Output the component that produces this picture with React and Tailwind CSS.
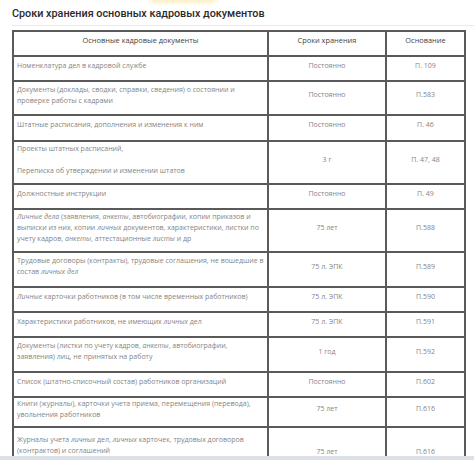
import React from "react";

const I = ({ children }) => <i className="italic">{children}</i>;

const rows = [
  { a: [["Номенклатура дел в кадровой службе"]], b: "Постоянно", c: "П. 109" },
  { a: [["Документы (доклады, сводки, справки, сведения) о состоянии и", "проверке работы с кадрами"]], b: "Постоянно", c: "П.583" },
  { a: [["Штатные расписания, дополнения и изменения к ним"]], b: "Постоянно", c: "П. 46" },
  { a: [["Проекты штатных расписаний,"], ["Переписка об утверждении и изменении штатов"]], b: "3 г", c: "П. 47, 48" },
  { a: [["Должностные инструкции"]], b: "Постоянно", c: "П. 49" },
  {
    a: [[
      <><I>Личные дела</I> (заявления, <I>анкеты</I>, автобиографии, копии приказов и</>,
      <>выписки из них, копии <I>личных</I> документов, характеристики, листки по</>,
      <>учету кадров, <I>анкеты</I>, аттестационные <I>листы</I> и др</>,
    ]],
    b: "75 лет",
    c: "П.588",
  },
  { a: [["Трудовые договоры (контракты), трудовые соглашения, не вошедшие в", <>состав <I>личных дел</I></>]], b: "75 л. ЭПК", c: "П.589" },
  { a: [[<><I>Личные</I> карточки работников (в том числе временных работников)</>]], b: "75 л. ЭПК", c: "П.590" },
  { a: [[<>Характеристики работников, не имеющих <I>личных</I> дел</>]], b: "75 л. ЭПК", c: "П.591" },
  { a: [[<>Документы (листки по учету кадров, <I>анкеты</I>, автобиографии,</>, "заявления) лиц, не принятых на работу"]], b: "1 год", c: "П.592" },
  { a: [["Список (штатно-списочный состав) работников организаций"]], b: "Постоянно", c: "П.602" },
  { a: [["Книги (журналы), карточки учета приема, перемещения (перевода),", "увольнения работников"]], b: "75 лет", c: "П.616" },
];

const cell = "bg-white flex flex-col justify-center pt-[2px] pb-[9px] overflow-visible";
const txt = "text-[7px] leading-[11px] text-[#858585] whitespace-nowrap";
const head = "text-[7.4px] leading-[11px] text-[#444] font-medium";

export default function App() {
  return (
    <div className="w-[474px] h-[460px] bg-white flex flex-col overflow-hidden" style={{ fontFamily: '"Open Sans", "Liberation Sans", sans-serif' }}>
      <div className="relative flex-1 overflow-hidden">
        <div className="absolute left-[150px] top-[-6px] w-[66px] h-[9px] rounded-full bg-[#fcefc4] blur-[2px]" />
        <div className="pl-[12px] pt-[6px]">
          <h1 className="text-[10.8px] leading-[15px] text-[#2a2a2a] font-medium" style={{ fontFamily: 'Roboto, "Liberation Sans", sans-serif' }}>
            Сроки хранения основных кадровых документов
          </h1>
          <div className="mt-[4px] h-px bg-[#e9e9e9]" />
        </div>
        <div className="ml-[12px] mt-[4px] w-[454px] bg-[#5a5a5a] p-[2px] grid grid-cols-[253px_116px_77px] gap-[2px] grid-rows-[23px_23px_32px_24px_41px_23px_41px_33px_23px_23px_33px_23px_28px_60px]">
          <div className={cell + " items-center"}>
            <span className={head}>Основные кадровые документы</span>
          </div>
          <div className={cell + " items-center"}>
            <span className={head}>Сроки хранения</span>
          </div>
          <div className={cell + " items-center"}>
            <span className={head}>Основание</span>
          </div>
          {rows.map((r, i) => (
            <React.Fragment key={i}>
              <div className={cell + " px-[3px] gap-[11px]"}>
                {r.a.map((p, j) => (
                  <p key={j} className={txt}>
                    {p.map((l, k) => (
                      <React.Fragment key={k}>
                        {l}
                        {k < p.length - 1 && <br />}
                      </React.Fragment>
                    ))}
                  </p>
                ))}
              </div>
              <div className={cell + " items-center"}>
                <span className={txt}>{r.b}</span>
              </div>
              <div className={cell + " items-center"}>
                <span className={txt}>{r.c}</span>
              </div>
            </React.Fragment>
          ))}
          <div className="bg-white px-[3px] pt-[6px]">
            <p className={txt}>
              Журналы учета <I>личных</I> дел, <I>личных</I> карточек, трудовых договоров
              <br />
              (контрактов) и соглашений
            </p>
          </div>
          <div className="bg-white flex flex-col items-center pt-[18px]">
            <span className={txt}>75 лет</span>
          </div>
          <div className="bg-white flex flex-col items-center pt-[18px]">
            <span className={txt}>П.616</span>
          </div>
        </div>
      </div>
      <div className="h-[4px] bg-[#dce1e7] shrink-0" />
    </div>
  );
}
